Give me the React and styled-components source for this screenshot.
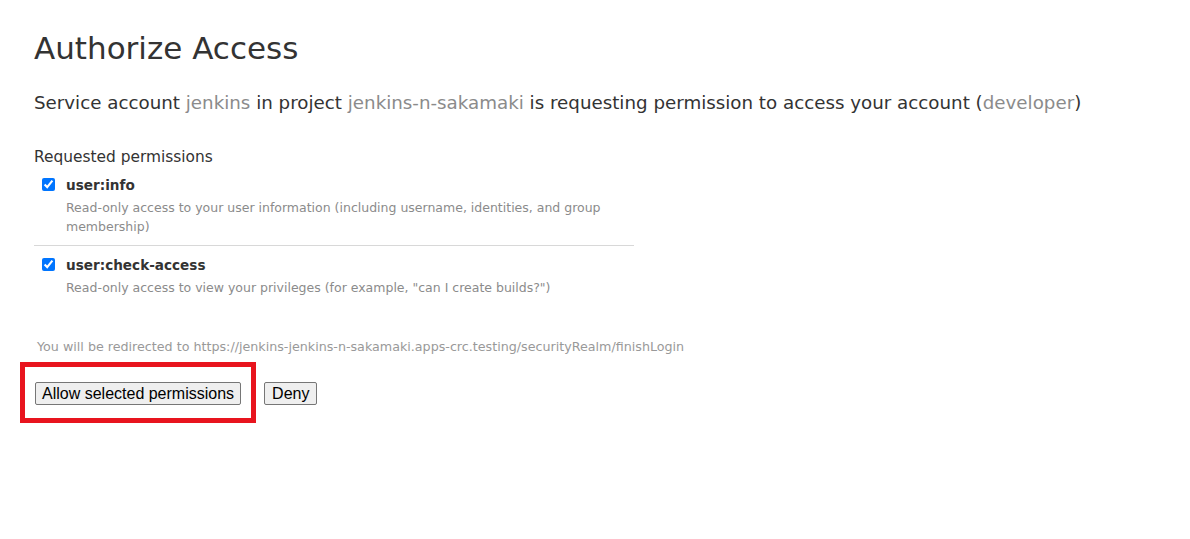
import React from "react";
import styled, { createGlobalStyle } from "styled-components";

const Global = createGlobalStyle`
  html, body { margin: 0; padding: 0; background: #fff; }
  body { font-family: "DejaVu Sans", Verdana, sans-serif; color: #333; }
`;

const Page = styled.main`
  padding: 26px 34px;
  display: flex;
  flex-direction: column;
`;

const Title = styled.h1`
  margin: 0;
  font-size: 31px;
  font-weight: 400;
  line-height: 44px;
  color: #333;
`;

const Lead = styled.p`
  margin: 19px 0 0;
  font-size: 18.25px;
  line-height: 28px;
  color: #333;
`;

const Muted = styled.span`
  color: #8b8b8b;
`;

const SectionLabel = styled.div`
  margin-top: 29px;
  font-size: 15.4px;
  line-height: 22px;
`;

const PermList = styled.ul`
  list-style: none;
  margin: 7px 0 0;
  padding: 0;
  width: 600px;
`;

const PermItem = styled.li`
  display: grid;
  grid-template-columns: 32px 1fr;
  padding: 0 0 ${(p) => (p.$last ? "0" : "9px")};
  margin-bottom: ${(p) => (p.$last ? "0" : "9px")};
  border-bottom: ${(p) => (p.$last ? "none" : "1px solid #d8d8d8")};
`;

const Check = styled.input`
  margin: 3px 0 0 8px;
  width: 13px;
  height: 13px;
  accent-color: #0075ff;
`;

const PermName = styled.div`
  font-size: 13.6px;
  font-weight: 700;
  line-height: 20px;
  color: #333;
`;

const PermDesc = styled.div`
  font-size: 12.5px;
  line-height: 19px;
  color: #8b8b8b;
  margin-top: 3px;
`;

const Redirect = styled.div`
  margin: 41px 0 0 3px;
  font-size: 12.7px;
  line-height: 18px;
  color: #999;
`;

const Actions = styled.form`
  display: flex;
  gap: 23px;
  margin: 26px 0 0 1px;
  align-items: center;
`;

const Highlight = styled.div`
  position: relative;
  display: inline-flex;
`;

const Marker = styled.span`
  position: absolute;
  left: -15px;
  top: -20px;
  right: -15px;
  bottom: -18px;
  border: 5px solid #e8141e;
  pointer-events: none;
`;

const Button = styled.button`
  font-family: "Liberation Sans", Arial, sans-serif;
  font-size: 16px;
  line-height: 19px;
  padding: 1px ${(p) => (p.$wide ? "7px" : "6px")};
  color: #000;
  background: #efefef;
  border: 1px solid #767676;
  border-radius: 2px;
`;

export default function App() {
  return (
    <>
      <Global />
      <Page>
        <Title>Authorize Access</Title>
        <Lead>
          Service account <Muted>jenkins</Muted> in project{" "}
          <Muted>jenkins-n-sakamaki</Muted> is requesting permission to access
          your account (<Muted>developer</Muted>)
        </Lead>
        <SectionLabel>Requested permissions</SectionLabel>
        <PermList>
          <PermItem>
            <Check type="checkbox" defaultChecked />
            <div>
              <PermName>user:info</PermName>
              <PermDesc>
                Read-only access to your user information (including username,
                identities, and group membership)
              </PermDesc>
            </div>
          </PermItem>
          <PermItem $last>
            <Check type="checkbox" defaultChecked />
            <div>
              <PermName>user:check-access</PermName>
              <PermDesc>
                Read-only access to view your privileges (for example, "can I
                create builds?")
              </PermDesc>
            </div>
          </PermItem>
        </PermList>
        <Redirect>
          You will be redirected to
          https://jenkins-jenkins-n-sakamaki.apps-crc.testing/securityRealm/finishLogin
        </Redirect>
        <Actions onSubmit={(e) => e.preventDefault()}>
          <Highlight>
            <Button type="submit">Allow selected permissions</Button>
            <Marker />
          </Highlight>
          <Button type="button" $wide>
            Deny
          </Button>
        </Actions>
      </Page>
    </>
  );
}
